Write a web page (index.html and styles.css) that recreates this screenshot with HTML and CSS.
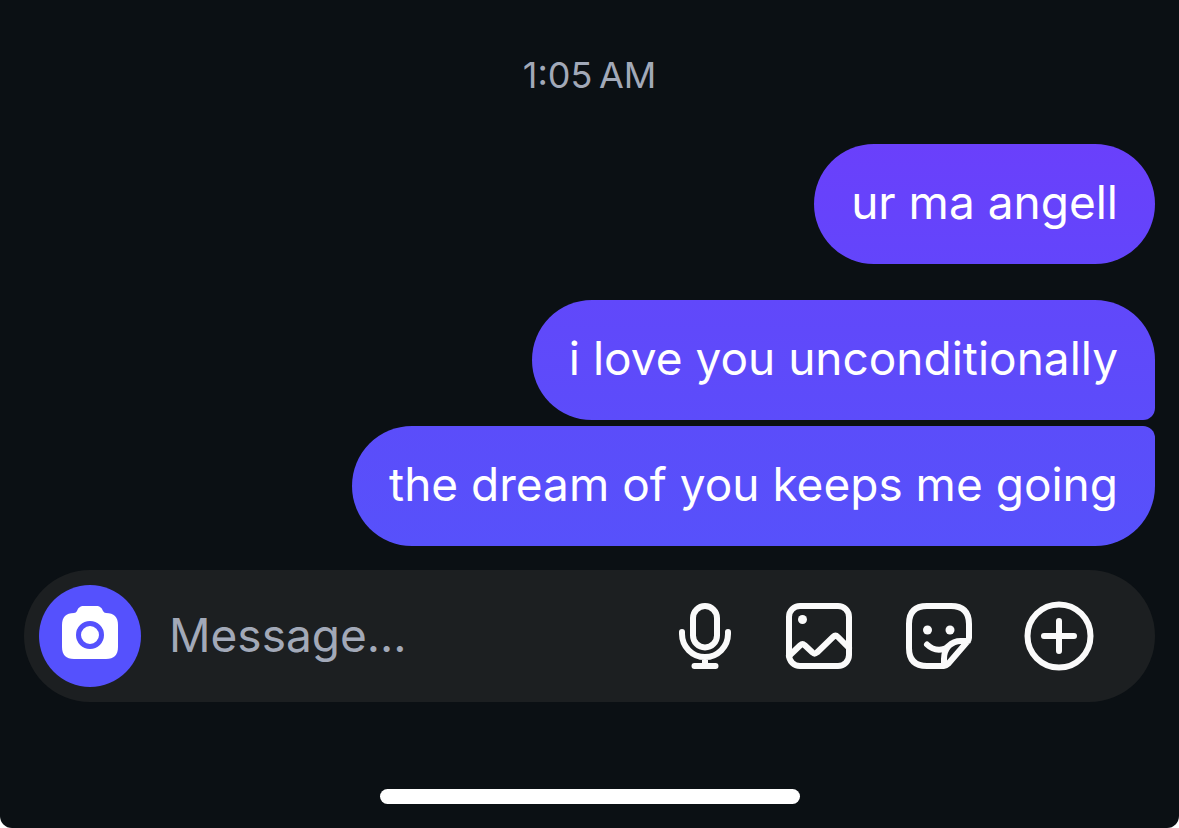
FILE: index.html
```html
<!DOCTYPE html>
<html lang="en">
<head>
<meta charset="utf-8">
<meta name="viewport" content="width=device-width, initial-scale=1">
<title>Chat</title>
<link rel="stylesheet" href="styles.css">
</head>
<body>
<main class="screen">
  <time class="stamp" datetime="01:05">1:05&#8239;AM</time>
  <section class="thread" aria-label="Messages">
    <p class="bubble bubble-single">ur ma angell</p>
    <p class="bubble bubble-first">i love you unconditionally</p>
    <p class="bubble bubble-last">the dream of you keeps me going</p>
  </section>
  <form class="composer">
    <button class="camera" type="button" aria-label="Camera">
      <svg class="camera-icon" viewBox="0 0 56 54"><path fill="#fff" d="M22 0h12c4 0 6 2 7 5q1 2 3 2c8 0 12 4 12 12v22c0 8-4 12-12 12H12C4 53 0 49 0 41V19C0 11 4 7 12 7q2 0 3-2c1-3 3-5 7-5Z"/><circle cx="28" cy="29" r="11.500" fill="#fff" stroke="#5551fd" stroke-width="5"/></svg>
    </button>
    <input class="field" type="text" placeholder="Message..." aria-label="Message">
    <div class="tools">
      <button class="tool" type="button" aria-label="Record voice">
        <svg class="icon icon-mic" viewBox="6 0 60 72"><rect x="24" y="6" width="24" height="41.500" rx="12"/><path d="M13 32v2a23 23 0 0 0 46 0v-2M36 57v9M25.500 66h21"/></svg>
      </button>
      <button class="tool" type="button" aria-label="Send photo">
        <svg class="icon" viewBox="0 0 72 72"><rect x="6" y="6" width="60" height="60" rx="11"/><path d="M6 56 17.500 45q2-2 4 0l8 7.500q2 2 4.500 0L50 37q2.500-2.500 5 0l11 11"/><circle class="dot" cx="19.500" cy="19.500" r="4.500"/></svg>
      </button>
      <button class="tool" type="button" aria-label="Send sticker">
        <svg class="icon" viewBox="0 0 72 72"><path d="M41 66H24Q6 66 6 48V24Q6 6 24 6h24q18 0 18 18v14q0 2-2 4L45 64q-2 2-4 2ZM41 65v-6c0-11 7-18 17-18h7M24 44.500c4 4 9 6.500 17 4.500 5-2 7-8 17-8"/><circle class="dot" cx="24.500" cy="30" r="4.500"/><circle class="dot" cx="47" cy="30" r="4.500"/></svg>
      </button>
      <button class="tool" type="button" aria-label="More">
        <svg class="icon" viewBox="0 0 72 72"><circle cx="36" cy="36" r="31.500"/><path d="M36 21v30M21 36h30"/></svg>
      </button>
    </div>
  </form>
  <div class="home-bar"></div>
</main>
</body>
</html>
```
FILE: styles.css
```css
* { box-sizing: border-box; }
body { margin: 0; background: #fff; font-family: Inter, "Liberation Sans", sans-serif; }
.screen { min-height: 100vh; display: flex; flex-direction: column; padding: 51px 24px 24px; background: #0b1014; border-radius: 0 0 12px 12px; }
.stamp { align-self: center; color: #a2a9b8; font-size: 36px; line-height: 48px; }
.thread { display: flex; flex-direction: column; align-items: flex-end; margin-top: 45px; }
.bubble { margin: 0; padding: 28px 37px 32px; color: #fff; font-size: 46px; line-height: 60px; border-radius: 60px; }
.bubble-single { margin-bottom: 36px; background: linear-gradient(#6a40fb, #6345fb); }
.bubble-first { margin-bottom: 6px; background: linear-gradient(#6148fa, #5c4cfa); border-bottom-right-radius: 12px; }
.bubble-last { background: linear-gradient(#5b4dfa, #5751fb); border-top-right-radius: 12px; }
.composer { display: flex; align-items: center; height: 132px; margin-top: 24px; padding: 0 60px 0 15px; border-radius: 66px; background: #1c1f21; }
.camera { display: grid; place-items: center; flex: none; width: 102px; height: 102px; padding: 0 0 6px; border: 0; border-radius: 50%; background: #5551fd; }
.camera-icon { display: block; width: 56px; height: 54px; }
.field { flex: 1; min-width: 0; margin-left: 28px; padding: 0 0 2px; border: 0; outline: 0; background: none; color: #fff; font: inherit; font-size: 46px; line-height: 60px; }
.field::placeholder { color: #a2a9b8; opacity: 1; }
.tools { display: flex; gap: 48px; }
.tool { display: block; padding: 0; border: 0; background: none; }
.icon { display: block; width: 72px; height: 72px; fill: none; stroke: #fafafa; stroke-width: 6; stroke-linecap: round; stroke-linejoin: round; }
.icon-mic { width: 60px; }
.dot { fill: #fafafa; stroke: none; }
.home-bar { align-self: center; width: 420px; height: 15px; margin-top: auto; border-radius: 8px; background: #fff; }
```
